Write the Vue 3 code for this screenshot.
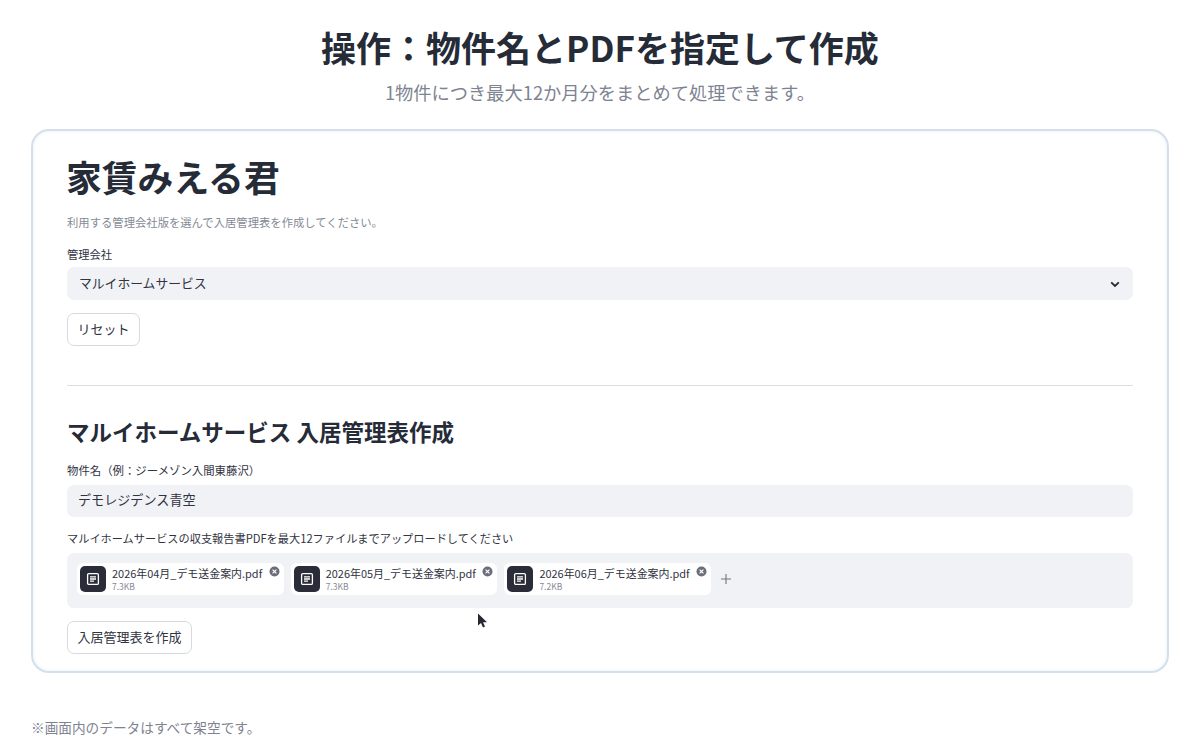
<script setup>
import { ref } from 'vue'

const company = ref('マルイホームサービス')
const propertyName = ref('デモレジデンス青空')
const files = ref([
  { name: '2026年04月_デモ送金案内.pdf', size: '7.3KB' },
  { name: '2026年05月_デモ送金案内.pdf', size: '7.3KB' },
  { name: '2026年06月_デモ送金案内.pdf', size: '7.2KB' }
])
</script>

<template>
  <div class="page">
    <header class="hero">
      <h1 class="hero-title">操作：物件名とPDFを指定して作成</h1>
      <p class="hero-sub">1物件につき最大12か月分をまとめて処理できます。</p>
    </header>

    <main class="card">
      <h2 class="app-title">家賃みえる君</h2>
      <p class="caption">利用する管理会社版を選んで入居管理表を作成してください。</p>

      <div class="label company-label">管理会社</div>
      <div class="select">
        <span>{{ company }}</span>
        <svg class="chevron" width="12" height="12" viewBox="0 0 12 12" fill="none">
          <path d="M2.2 4.3 6 8l3.8-3.7" stroke="#262730" stroke-width="1.8" />
        </svg>
      </div>

      <button class="btn reset-btn" type="button">リセット</button>

      <hr class="divider" />

      <h3 class="section-title">マルイホームサービス 入居管理表作成</h3>

      <div class="label name-label">物件名（例：ジーメゾン入間東藤沢）</div>
      <div class="input">{{ propertyName }}</div>

      <div class="label upload-label">マルイホームサービスの収支報告書PDFを最大12ファイルまでアップロードしてください</div>
      <div class="dropzone">
        <div v-for="file in files" :key="file.name" class="chip">
          <span class="file-icon">
            <svg width="16" height="16" viewBox="0 0 16 16" fill="none" stroke="#fff" stroke-width="1.3">
              <rect x="2.6" y="2.6" width="10.8" height="10.8" rx="1.2" />
              <path d="M5 5.8h6M5 8h6M5 10.2h4" />
            </svg>
          </span>
          <span class="file-text">
            <span class="file-name">{{ file.name }}</span>
            <span class="file-size">{{ file.size }}</span>
          </span>
          <svg class="file-remove" width="11" height="11" viewBox="0 0 11 11">
            <circle cx="5.5" cy="5.5" r="5" fill="#6b6e78" />
            <path d="M3.6 3.6l3.8 3.8M7.4 3.6 3.6 7.4" stroke="#fff" stroke-width="1.2" />
          </svg>
        </div>
        <svg class="add" width="10" height="10" viewBox="0 0 10 10">
          <path d="M5 0v10M0 5h10" stroke="#73757e" stroke-width="1.1" />
        </svg>
      </div>

      <button class="btn submit-btn" type="button">入居管理表を作成</button>
    </main>

    <p class="note">※画面内のデータはすべて架空です。</p>

    <!-- マウスカーソル -->
    <svg class="cursor" width="11" height="16" viewBox="0 0 11 16">
      <path d="M1 0.5v12l3-2.6 2 4.6 2-0.9-2-4.4h4z" fill="#262730" />
    </svg>
  </div>
</template>

<style scoped>
.page {
  position: relative;
  width: 1200px;
  height: 750px;
  overflow: hidden;
  background: #ffffff;
  color: #262b38;
  font-family: "Noto Sans CJK JP", "Noto Sans", sans-serif;
}

.hero {
  padding-top: 24px;
  text-align: center;
}

.hero-title {
  margin: 0;
  font-size: 35px;
  line-height: 46px;
  font-weight: 700;
}

.hero-sub {
  margin: 9px 0 0;
  font-size: 18.25px;
  line-height: 26px;
  color: #7d8391;
}

.card {
  box-sizing: border-box;
  width: 1138px;
  height: 544px;
  margin: 24px 0 0 31px;
  padding: 21px 35px 0 34px;
  background: #fff;
  border: 2px solid #d5dfec;
  border-radius: 18px;
  box-shadow: inset 0 0 4px #e9eef6;
}

.app-title {
  margin: 0 0 0 -1px;
  font-size: 35.8px;
  line-height: 48px;
  font-weight: 700;
}

.caption {
  margin: 13px 0 0;
  font-size: 11.33px;
  line-height: 18px;
  color: #858a96;
}

.label {
  font-size: 11.25px;
  line-height: 18px;
  color: #31333f;
}

.company-label {
  margin-top: 14px;
}

.select,
.input {
  box-sizing: border-box;
  display: flex;
  align-items: center;
  width: 1066px;
  padding: 0 12px 2px;
  background: #f0f2f6;
  border-radius: 7px;
  color: #31333f;
}

.select {
  justify-content: space-between;
  height: 33px;
  margin-top: 4px;
  font-size: 12.8px;
}

.chevron {
  margin-top: 2px;
}

.input {
  height: 32px;
  margin-top: 6px;
  padding: 0 11px 3px;
  font-size: 13.1px;
}

.btn {
  display: block;
  box-sizing: border-box;
  height: 33px;
  padding: 0 9.5px 3px;
  background: #fff;
  border: 1px solid #d7d9de;
  border-radius: 7px;
  font-family: inherit;
  font-size: 13px;
  color: #31333f;
}

.reset-btn {
  margin-top: 13px;
}

.divider {
  width: 1066px;
  margin: 39px 0 0;
  border: 0;
  border-top: 1px solid #dcdde1;
}

.section-title {
  margin: 27px 0 0;
  font-size: 22.5px;
  line-height: 36px;
  font-weight: 700;
}

.name-label {
  margin-top: 12px;
  font-size: 11.4px;
}

.upload-label {
  margin-top: 12px;
  font-size: 11.2px;
}

.dropzone {
  box-sizing: border-box;
  display: flex;
  align-items: flex-start;
  gap: 7px;
  width: 1066px;
  height: 55px;
  margin-top: 6px;
  padding: 10px;
  background: #f0f2f6;
  border-radius: 7px;
}

.chip {
  position: relative;
  display: flex;
  align-items: center;
  gap: 6px;
  height: 32px;
  padding: 0 21.5px 0 3px;
  background: #fff;
  border-radius: 6px;
}

.file-icon {
  display: flex;
  align-items: center;
  justify-content: center;
  width: 26px;
  height: 26px;
  background: #2a2c38;
  border-radius: 5px;
}

.file-text {
  display: flex;
  flex-direction: column;
  gap: 1px;
}

.file-name {
  font-size: 10.95px;
  line-height: 14px;
  color: #31333f;
}

.file-size {
  font-size: 8.5px;
  line-height: 11px;
  color: #858a96;
}

.file-remove {
  position: absolute;
  top: 3px;
  right: 4px;
}

.add {
  margin: 11px 0 0 3px;
}

.submit-btn {
  margin-top: 13px;
}

.note {
  margin: 45px 0 0 31px;
  font-size: 13.67px;
  line-height: 18px;
  color: #7d8391;
}

.cursor {
  position: absolute;
  left: 477px;
  top: 613px;
}
</style>
